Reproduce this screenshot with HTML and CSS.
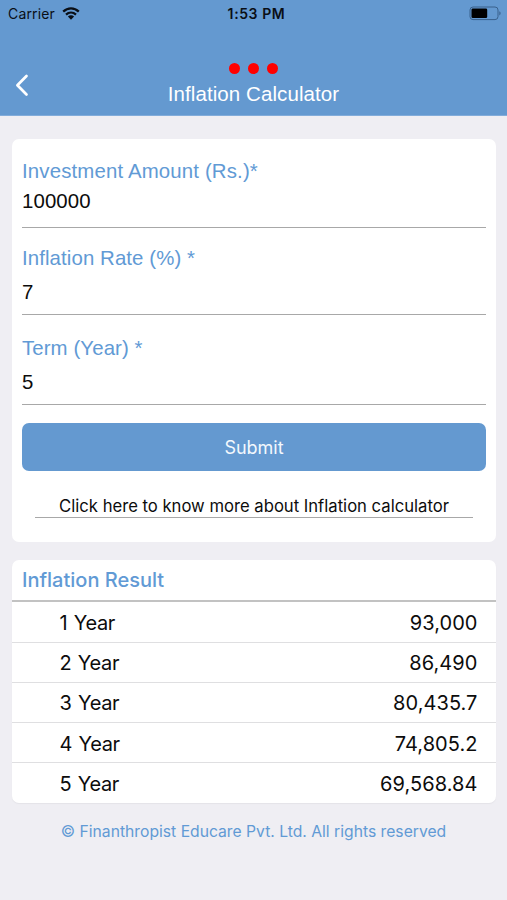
FILE: index.html
```html
<!DOCTYPE html>
<html lang="en">
<head>
<meta charset="utf-8">
<title>Inflation Calculator</title>
<link rel="stylesheet" href="styles.css">
</head>
<body>
<header class="header">
  <div class="status">
    <div class="carrier"><span class="carrier-name">Carrier</span>
      <svg class="wifi" width="18" height="13" viewBox="0 0 18 13"><g fill="none" stroke="#0a0f16" stroke-width="2.3"><path d="M1.2 4.6C5.7.3 12.3.3 16.8 4.6"/><path d="M4 7.6c3-2.7 7-2.7 10 0"/></g><path d="M5.9 9.5c1.8-1.6 4.4-1.6 6.2 0L9 12.7z" fill="#0a0f16"/></svg>
    </div>
    <div class="clock">1:53 PM</div>
    <div class="battery"><svg width="33" height="15" viewBox="0 0 33 15"><rect x="1" y="1" width="28" height="12.6" rx="3" fill="none" stroke="#39618c" stroke-width="1"/><rect x="2.5" y="2.5" width="15.7" height="9.5" rx="1.3" fill="#000"/><path d="M30.3 5.2c1.8.6 1.8 3.6 0 4.2z" fill="#39618c"/></svg></div>
  </div>
  <div class="navbar">
    <svg class="back" width="14" height="23" viewBox="0 0 14 23"><path d="M11.5 2 2.4 11.3 11.5 20.5" fill="none" stroke="#fff" stroke-width="2.7" stroke-linecap="round" stroke-linejoin="round"/></svg>
    <div class="heading">
      <div class="dots"><i></i><i></i><i></i></div>
      <h1 class="title">Inflation Calculator</h1>
    </div>
  </div>
</header>
<main class="content">
  <section class="card form">
    <div class="field first"><label class="label amount">Investment Amount (Rs.)*</label><div class="value">100000</div></div>
    <div class="field second"><label class="label rate">Inflation Rate (%) *</label><div class="value">7</div></div>
    <div class="field third"><label class="label term">Term (Year) *</label><div class="value">5</div></div>
    <button class="submit"><span class="submit-text">Submit</span></button>
    <a class="more"><span class="more-text">Click here to know more about Inflation calculator</span></a>
  </section>
  <section class="card result">
    <h2 class="result-title"><span>Inflation Result</span></h2>
    <div class="row"><span class="year">1 Year</span><span class="num">93,000</span></div>
    <div class="row"><span class="year">2 Year</span><span class="num">86,490</span></div>
    <div class="row"><span class="year">3 Year</span><span class="num">80,435.7</span></div>
    <div class="row"><span class="year">4 Year</span><span class="num">74,805.2</span></div>
    <div class="row"><span class="year">5 Year</span><span class="num">69,568.84</span></div>
  </section>
</main>
<footer class="footer"><span class="copy">© Finanthropist Educare Pvt. Ltd. All rights reserved</span></footer>
</body>
</html>
```
FILE: styles.css
```css
* { box-sizing: border-box; }
body { margin: 0; height: 900px; background: #efeef3; font-family: Inter, sans-serif; color: #0c0c0c; overflow: hidden; }
.header { height: 116px; background: #6499d0; border-bottom: 1px solid #82acda; }
.status { height: 28px; display: grid; grid-template-columns: 1fr auto 1fr; align-items: center; padding: 0 5px 0 8px; color: #0a0f16; font-size: 14px; line-height: 16px; }
.carrier { display: flex; align-items: center; gap: 7px; letter-spacing: .15px; }
.carrier-name, .clock { margin-top: -1px; }
.wifi { margin-top: -2px; }
.clock { font-weight: 600; letter-spacing: .6px; padding-left: 3px; }
.battery { display: flex; justify-content: flex-end; margin-top: -2px; }
.navbar { display: grid; grid-template-columns: 15px 1fr 15px; padding: 0 15px; height: 87px; }
.back { margin-top: 46px; }
.heading { display: flex; flex-direction: column; align-items: center; padding-top: 35px; }
.dots { display: flex; gap: 8px; height: 11px; }
.dots i { width: 11px; height: 11px; border-radius: 50%; background: #f00; }
.title { margin: 8px 0 0; font: 400 20.5px/24px "Liberation Sans", sans-serif; letter-spacing: .08px; color: #fff; white-space: nowrap; font-variant-ligatures: none; }
.content { padding: 23px 11px 0 12px; display: flex; flex-direction: column; gap: 18px; }
.card { background: #fff; border-radius: 7px; overflow: hidden; }
.form { height: 403px; padding: 0 10px; }
.field { border-bottom: 1px solid #a8a8a8; display: flex; flex-direction: column; font: 20.4px/24px "Liberation Sans", sans-serif; letter-spacing: .1px; }
.label { color: #619ad5; white-space: nowrap; }
.amount { letter-spacing: .15px; }
.first { height: 89px; padding-top: 20px; }
.first .value { margin-top: 6px; }
.second { height: 87px; padding-top: 18px; }
.second .value, .third .value { margin-top: 10px; }
.third { height: 90px; padding-top: 21px; }
.submit { display: flex; align-items: center; justify-content: center; width: 100%; height: 48px; margin-top: 18px; padding: 0; border: 0; border-radius: 7px; background: #6499d0; color: #f3f8fd; font: 18px Inter, sans-serif; }
.more { display: flex; justify-content: center; align-items: flex-end; height: 47px; margin: 0 13px; border-bottom: 1px solid #a8a8a8; font-size: 16.65px; line-height: 21px; white-space: nowrap; }
.result { height: 243px; box-shadow: 0 1px 1px #e4e3e8; }
.result-title { margin: 0; height: 42px; padding: 0 10px; border-bottom: 2px solid #c2c2c2; font-size: 20px; font-weight: 500; line-height: 40px; color: #619ad5; }
.row { height: 40.2px; padding: 2px 18.5px 0 47.5px; border-bottom: 1px solid #dfdfe1; display: flex; justify-content: space-between; align-items: center; font-size: 20px; line-height: 36px; }
.result-title + .row { height: 40.6px; }
.year { letter-spacing: -.35px; word-spacing: 1.2px; }
.num { letter-spacing: .06px; }
.row:last-child { border-bottom: 0; }
.footer { display: flex; justify-content: center; margin-top: 19px; font-size: 15.7px; line-height: 20px; color: #619ad5; white-space: nowrap; }
```
